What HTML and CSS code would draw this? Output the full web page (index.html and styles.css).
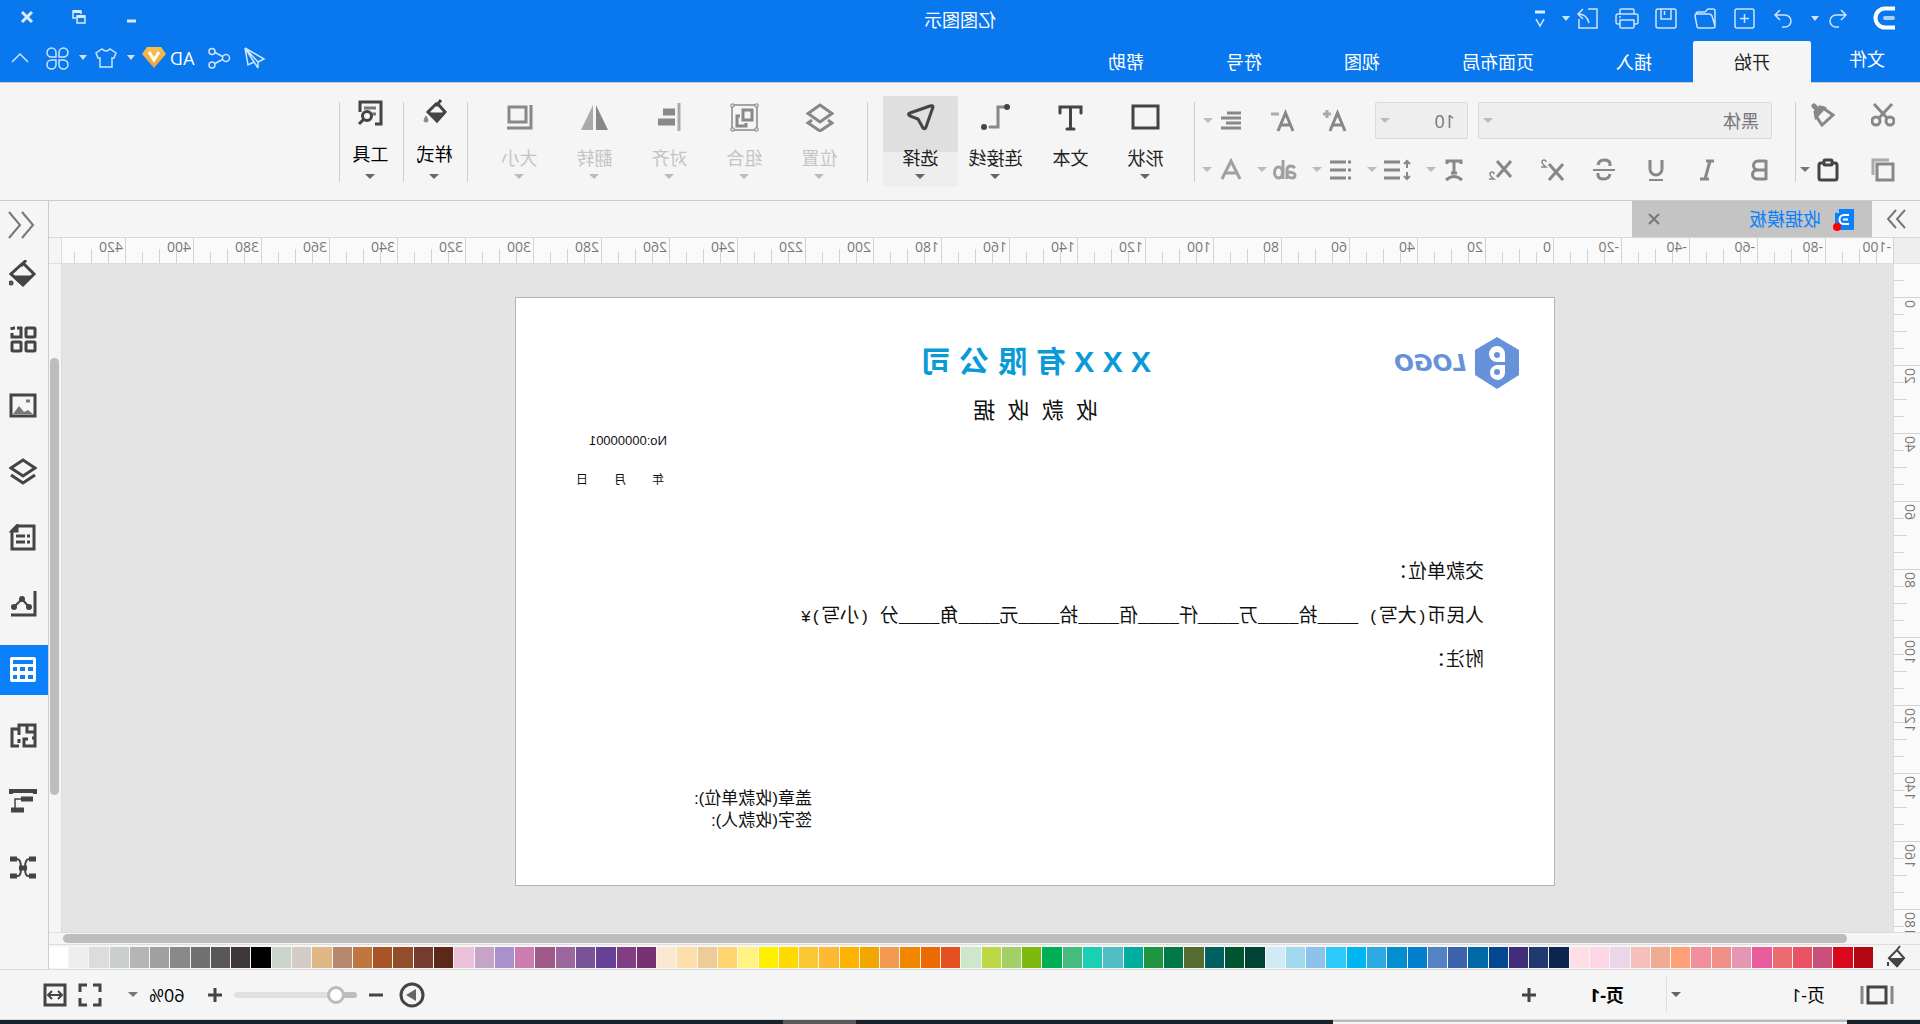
FILE: index.html
```html
<!DOCTYPE html>
<html lang="zh-CN">
<head>
<meta charset="utf-8">
<title>亿图图示</title>
<link rel="stylesheet" href="styles.css">
</head>
<body>
<div class="window">
  <header class="header">
    <div class="titlebar">
      <div class="quick">
        <svg class="brand" width="24" height="26" viewBox="0 0 24 26" fill="none"><path d="M1 3.500H11A9.500 9.500 0 0 1 11 22.500H1" stroke="#fff" stroke-width="4"/><path d="M3 13h8" stroke="#a9cffa" stroke-width="4" stroke-linecap="round"/></svg>
        <button aria-label="撤销"><svg class="ico"><path d="M8 4 3 9l5 5M3 9h10a6 6 0 0 1 0 12h-3"/></svg></button>
        <button class="caret" aria-label="撤销列表"></button>
        <button aria-label="重做"><svg class="ico"><path d="M15 4l5 5-5 5M20 9H10a6 6 0 0 0 0 12h3"/></svg></button>
        <button aria-label="新建"><svg class="ico"><rect x="2" y="3" width="19" height="19" rx="2"/><path d="M11.500 8v9M7 12.500h9"/></svg></button>
        <button aria-label="打开"><svg class="ico"><path d="M2 20V5q0-2 2-2h5l3 3h7q2 0 2 2M2 20q0 2 2 2h14q2 0 2-2l2-10q0-2-2-2H8q-2 0-3 2z"/></svg></button>
        <button aria-label="保存"><svg class="ico"><rect x="2" y="3" width="20" height="19" rx="2"/><path d="M7 3v10h10V3M13.500 5v4"/></svg></button>
        <button aria-label="打印"><svg class="ico"><path d="M5 8V4q0-1 1-1h12q1 0 1 1v4M5 18H3q-2 0-2-2v-6q0-2 2-2h18q2 0 2 2v6q0 2-2 2h-2M5 14h14v7q0 1-1 1H6q-1 0-1-1zM18 11h2"/></svg></button>
        <button aria-label="导出"><svg class="ico"><path d="M12 3H3v19h18v-9M17 3l5 5-5 5M22 8q-9 0-11 9"/></svg></button>
        <button class="caret" aria-label="导出列表"></button>
        <button aria-label="更多"><svg width="12" height="24" viewBox="0 0 12 24"><path d="M1 6h10" stroke="#dbeafd" stroke-width="3" fill="none"/><path d="M2 13l4 7 4-7" stroke="#dbeafd" stroke-width="1.500" fill="none"/></svg></button>
      </div>
      <h1 class="app-title">亿图图示</h1>
      <div class="win-controls">
        <button aria-label="最小化"><svg width="14" height="14"><path d="M2 11h9" stroke="#dbeafd" stroke-width="3"/></svg></button>
        <button aria-label="还原"><svg width="14" height="14" fill="none" stroke="#dbeafd"><path d="M1 6h8v7H1z" stroke-width="1.500"/><path d="M1 6.500h8" stroke-width="3"/><path d="M5 4V1h8v7h-3" stroke-width="1.500"/><path d="M5 1.500h8" stroke-width="3"/></svg></button>
        <button aria-label="关闭"><svg width="14" height="14"><path d="M2 2l10 10M12 2 2 12" stroke="#dbeafd" stroke-width="3"/></svg></button>
      </div>
    </div>
    <div class="menurow">
      <nav class="menu">
        <a class="file" href="#file">文件</a>
        <a class="current" href="#home">开始</a>
        <a href="#insert">插入</a>
        <a href="#layout">页面布局</a>
        <a href="#view">视图</a>
        <a href="#symbol">符号</a>
        <a href="#help">帮助</a>
      </nav>
      <div class="account">
        <button aria-label="发送"><svg class="ico"><path d="M21 2 2 13l6 3zM21 2 18 19l-6-3M8 16v6M12 16 21 2M8 22l4-6"/></svg></button>
        <button aria-label="分享"><svg class="ico"><circle cx="5" cy="12" r="3.500"/><circle cx="19" cy="5.500" r="3"/><circle cx="19" cy="19" r="3"/><path d="M8.500 10.500l7.500-4M8.500 13.500l7.500 4"/></svg></button>
        <button class="user">AD <svg width="24" height="22" viewBox="0 0 24 22"><defs><linearGradient id="g" x2="0" y2="1"><stop stop-color="#fbbf4a"/><stop offset="1" stop-color="#e9a63c"/></linearGradient></defs><path d="M5 0h14l5 7-12 14L0 7z" fill="url(#g)"/><path d="M7 5l5 8 5-8" fill="none" stroke="#fff" stroke-width="3"/></svg></button>
        <button class="caret" aria-label="账户"></button>
        <button aria-label="主题"><svg class="ico"><path d="M8 3q4 4 8 0l6 4-2 5h-2v9H6v-9H4L2 7z"/></svg></button>
        <button class="caret" aria-label="主题列表"></button>
        <button aria-label="应用"><svg class="ico"><path d="M11 11H6.500A4.500 4.500 0 1 1 11 6.500zM14 11h4.500A4.500 4.500 0 1 0 14 6.500zM11 14H6.500A4.500 4.500 0 1 0 11 18.500zM14 14h4.500A4.500 4.500 0 1 1 14 18.500z"/></svg></button>
        <button aria-label="收起"><svg class="ico"><path d="M4 16l8-8 8 8"/></svg></button>
      </div>
    </div>
  </header>

  <section class="ribbon">
    <div class="group clip">
      <div class="row"><button aria-label="剪切"><svg class="tool"><circle cx="5" cy="18" r="4"/><circle cx="19" cy="18" r="4"/><path d="M3 1l13 14M21 1 8 15"/></svg></button><button aria-label="格式刷"><svg class="tool"><path d="M2 12 12 5l7 8-6 9z"/><path d="M11 5l4-1 5 5-1 5z" fill="#888"/><path d="M17 7l4-4" stroke-width="5" stroke-linecap="round"/></svg></button></div>
      <div class="row"><button aria-label="复制"><svg class="tool"><rect x="2" y="6" width="16" height="16"/><path d="M6 2h16v15" stroke="#aaa"/></svg></button><button class="split" aria-label="粘贴"><svg class="tool dark"><rect x="3" y="5" width="18" height="17" rx="2"/><rect x="8" y="2" width="8" height="5" rx="1" fill="#f5f5f5"/></svg><i class="arrow mid"></i></button></div>
    </div>
    <div class="sep"></div>
    <div class="group font">
      <div class="row">
        <label class="combo wide"><select aria-label="字体"><option>黑体</option></select><i class="arrow"></i></label>
        <label class="combo small"><select aria-label="字号"><option>10</option></select><i class="arrow"></i></label>
        <div class="set first">
        <button aria-label="增大字号"><svg class="tool"><path d="M2 22 9.500 4 17 22M5 16h9"/><path d="M16 5h8M20 1v8" stroke="#aaa"/></svg></button>
        <button aria-label="减小字号"><svg class="tool"><path d="M2 22 9.500 4 17 22M5 16h9"/><path d="M16 5h8" stroke="#aaa"/></svg></button>
        <button class="split" aria-label="对齐"><svg class="tool"><path d="M2 4h14M2 9h20M2 14h15M2 19h20"/></svg><i class="arrow"></i></button>
        </div>
      </div>
      <div class="row">
        <div class="set marks">
        <button aria-label="加粗"><svg class="tool"><path d="M6 3h8a4 4 0 0 1 0 9H6M7 12h8a4 4 0 0 1 0 9H6M6 2v20"/></svg></button>
        <button aria-label="斜体"><svg class="tool"><path d="M6 3h8M11 21h9M10 3l5 18"/></svg></button>
        <button aria-label="下划线"><svg class="tool"><path d="M6 2v9a6 6 0 0 0 12 0V2"/><path d="M5 22h14" stroke-width="2"/></svg></button>
        <button aria-label="删除线"><svg class="tool"><path d="M18 7q-1-5-6-5-6 0-6 4v2M6 16q1 5 6 5 6 0 6-4v-2"/><path d="M1 12h22" stroke-width="2"/></svg></button>
        <button aria-label="上标"><svg class="tool"><path d="M1 6l14 16M15 6 1 22"/><path d="M18 4q0-2 2-2t2 2q0 2-4 5h5" stroke-width="1.500"/></svg></button>
        <button aria-label="下标"><svg class="tool"><path d="M1 3l14 16M15 3 1 19"/><path d="M18 16q0-2 2-2t2 2q0 2-4 5h5" stroke-width="1.500"/></svg></button>
        </div>
        <div class="set drops">
        <button class="split" aria-label="文字方向"><svg class="tool"><path d="M5 6V3h14v3M12 3v12M9 15h6"/><path d="M4 22q8-7 16 0"/></svg><i class="arrow"></i></button>
        <button class="split" aria-label="行距"><svg class="tool spacing"><path d="M4 3v7M4 14v7M1 6l3-3 3 3M1 18l3 3 3-3" stroke-width="2"/><path d="M11 4h16M11 12h16M11 20h16"/></svg><i class="arrow"></i></button>
        <button class="split" aria-label="列表"><svg class="tool"><path d="M1 4h3M1 12h3M1 20h3M6 4h16M6 12h16M6 20h16"/></svg><i class="arrow"></i></button>
        <button class="split" aria-label="高亮"><svg class="tool soft"><path d="M2 10q2-2 4-2 4 0 4 4v9M10 14q-8 0-8 3 0 3 3 3 4 0 5-4M14 2v19"/><ellipse cx="18.500" cy="14.500" rx="4" ry="5.500"/></svg><i class="arrow"></i></button>
        <button class="split" aria-label="字体颜色"><svg class="tool soft"><path d="M2 21 11 3l9 18M5 15h12"/></svg><i class="arrow"></i></button>
        </div>
      </div>
    </div>
    <div class="sep"></div>
    <div class="bigs">
      <button class="big"><svg class="pic"><rect x="2" y="3" width="25" height="22"/></svg><span>形状</span><i class="arrow dk"></i></button>
      <button class="big"><svg class="pic"><path d="M4 10V4h21v6M14.500 4v22M11 26h7"/></svg><span>文本</span></button>
      <button class="big"><svg class="pic"><path d="M4 4h8v20h8" stroke="#888"/><circle cx="3" cy="4" r="1.500"/><circle cx="26" cy="24" r="1.500"/></svg><span>连接线</span><i class="arrow dk"></i></button>
      <button class="big chosen"><svg class="pic"><path d="M2 4q0-2 3-1l20 7q3 1 0 3l-8 3-5 9q-2 2-3-1z"/></svg><span>选择</span><i class="arrow dk"></i></button>
    </div>
    <div class="sep"></div>
    <div class="bigs off">
      <button class="big" disabled><svg class="pic"><path d="M14 2l12 8.500L14 19 2 10.500zM6 17l-4 3 12 8 12-8-4-3"/></svg><span>位置</span><i class="arrow"></i></button>
      <button class="big" disabled><svg class="pic"><path d="M2 2h25v25H2z" stroke-width="1.500"/><path d="M7 7h9v10H7zM19 13h3v10h-9v-3"/><path d="M1 1h3v3H1zM25 1h3v3h-3zM1 25h3v3H1zM25 25h3v3h-3z" fill="#eee" stroke-width="1"/></svg><span>组合</span><i class="arrow"></i></button>
      <button class="big" disabled><svg class="pic"><path d="M5 0v28" stroke="#aaa"/><path d="M9 9h12M9 19h17" stroke-width="7"/></svg><span>对齐</span><i class="arrow"></i></button>
      <button class="big" disabled><svg class="pic"><path d="M13 2v25H1z" fill="#888" stroke="none"/><path d="M16 2v25h12z" fill="#aaa" stroke="none"/></svg><span>翻转</span><i class="arrow"></i></button>
      <button class="big" disabled><svg class="pic"><path d="M8 4h17v15H8zM3 2v23h24"/></svg><span>大小</span><i class="arrow"></i></button>
    </div>
    <div class="sep"></div>
    <button class="big narrow"><svg class="pic"><path d="M8 1l5 6M11 5 4 13l8 9 9-9-9-9"/><path d="M4 14h17l-9 9z" fill="#444" stroke-width="1"/><path d="M23 17q-4 6 0 6t0-6z" fill="#888" stroke="#888" stroke-width="1"/></svg><span>样式</span><i class="arrow dk"></i></button>
    <div class="sep"></div>
    <button class="big narrow"><svg class="pic"><path d="M10 25H4V3h21v10"/><path d="M9 9h12M9 15h4" stroke="#777"/><circle cx="18" cy="17" r="4.500"/><path d="M21 20l5 5"/></svg><span>工具</span><i class="arrow dk"></i></button>
    <div class="sep"></div>
  </section>

  <main class="work">
    <section class="editor">
      <div class="tabs">
        <button class="expand" aria-label="展开"><svg width="20" height="20"><path d="M1 1l8 9-8 9M10 1l8 9-8 9" fill="none" stroke="#777" stroke-width="2"/></svg></button>
        <div class="tab">
          <svg width="21" height="24" viewBox="0 0 21 24"><path d="M0 2h15l4 4v17H0z" fill="#0a80fb"/><path d="M15 2v4h4z" fill="#9cc9fb"/><path d="M5 8h5a4.500 4.500 0 0 1 0 9H5M6 12.500h5" fill="none" stroke="#fff" stroke-width="2"/><circle cx="17" cy="20" r="4" fill="#f00"/></svg>
          <span>收据模板</span>
          <button aria-label="关闭标签"><svg width="12" height="12"><path d="M1 1l10 10M11 1 1 11" stroke="#777" stroke-width="2"/></svg></button>
        </div>
      </div>
      <div class="ruler-row"><div class="corner"></div><div class="ruler-h" id="rulerH"></div><div class="corner end"></div></div>
      <div class="stage-row">
        <div class="ruler-v" id="rulerV"></div>
        <div class="stage">
          <article class="paper">
            <div class="obj mark"><svg width="44" height="52" viewBox="0 0 44 52"><path d="M22 0l22 13v25L22 52 0 38V13z" fill="#6792da"/><path d="M14 25V17a8 8 0 1 1 8 8zM14 28h8a7.500 7.500 0 1 1-8 8z" fill="#fff"/><circle cx="22" cy="18" r="3" fill="#6792da"/><circle cx="22" cy="35" r="3" fill="#6792da"/></svg><span>LOGO</span></div>
            <h2 class="obj company">X X X 有 限 公 司</h2>
            <p class="obj receipt">收&nbsp; 款&nbsp; 收&nbsp; 据</p>
            <p class="obj number">No:00000001</p>
            <p class="obj date"><span>年</span><span>月</span><span>日</span></p>
            <div class="obj lines">
              <p>交款单位：</p>
              <p>人民币<code>(</code>大写<code>) ____</code>拾<code>____</code>万<code>____</code>仟<code>____</code>佰<code>____</code>拾<code>____</code>元<code>____</code>角<code>____</code>分<code> (</code>小写<code>)¥</code></p>
              <p>附注：</p>
            </div>
            <p class="obj sign">盖章(收款单位):<br>签字(收款人):</p>
          </article>
        </div>
        <div class="vscroll"><div class="thumb"></div></div>
      </div>
      <div class="hscroll"><div class="thumb"></div></div>
      <div class="palette">
        <button aria-label="填充"><svg width="20" height="24" fill="none" stroke="#444" stroke-width="2"><path d="M6 1l4 5M9 5l8 8-8 8-7-8z"/><path d="M3 14h13l-7 7z" fill="#444"/><path d="M18 17v4"/></svg></button>
        <div class="swatches" id="swatches"></div>
      </div>
    </section>
    <aside class="side">
      <button class="fold" aria-label="折叠"><svg width="28" height="28"><path d="M13 1 2 14l11 13M26 1 15 14l11 13" fill="none" stroke="#777" stroke-width="2"/></svg></button>
      <button aria-label="填充"><svg class="panel"><path d="M11 0l5 6M14 3 3 14l11 11 12-11L14 3"/><path d="M4 16h21L14 26z" fill="#444" stroke-width="1"/><circle cx="26" cy="23" r="1"/></svg></button>
      <button aria-label="符号"><svg class="panel"><rect x="2" y="2" width="9" height="9" rx="1"/><rect x="16" y="16" width="9" height="9" rx="1"/><rect x="2" y="16" width="9" height="9" rx="1"/><path d="M20 2h-4v9h9V7M22 2h2M25 1v3"/></svg></button>
      <button aria-label="图片"><svg class="panel"><rect x="2" y="3" width="24" height="21"/><path d="M4 22l5-4 4 2 5-6 6 8z" fill="#777" stroke="none"/><path d="M7 9h4" stroke="#777"/></svg></button>
      <button aria-label="图层"><svg class="panel"><path d="M14 2l12 8-12 8-12-8zM2 17l12 8 12-8"/></svg></button>
      <button aria-label="备注"><svg class="panel"><path d="M3 2h17l5 5v18H3z"/><path d="M20 2v5h5z" fill="#444"/><path d="M7 12h3M12 12h9M7 18h3M12 18h9"/></svg></button>
      <button aria-label="图表"><svg class="panel"><path d="M2 1v24h24"/><path d="M8 17l7-8 8 8" stroke-width="2"/><circle cx="8" cy="17" r="1.500"/><circle cx="15" cy="9" r="1.500"/><circle cx="23" cy="17" r="1.500"/></svg></button>
      <button class="chosen" aria-label="表格"><svg class="panel"><rect x="1" y="1" width="26" height="25" rx="2" fill="#fff" stroke="none"/><path d="M4 6h20M4 13h5M12 13h5M20 13h4M4 21h5M12 21h5M20 21h4" stroke="#0a80fb" stroke-width="4"/></svg></button>
      <button aria-label="平面图"><svg class="panel"><path d="M18 10V3H2v21h11v-7H9M18 7h7v17h-7M10 3v7H2M2 16h3M18 13v-3M18 17v4"/></svg></button>
      <button aria-label="甘特图"><svg class="panel"><path d="M2 6V3h24v3" stroke-width="4"/><path d="M4 11h12M13 22h13" stroke-width="5"/><path d="M16 11h6v10" stroke-width="1.500"/></svg></button>
      <button aria-label="导图"><svg class="panel"><path d="M1 5h7M1 22h7M20 5h7M20 22h7M10 14h8" stroke-width="5"/><path d="M8 5q4 0 4 9t-4 8M20 5q-4 0-4 9t4 8" stroke-width="2"/></svg></button>
    </aside>
  </main>

  <footer class="status">
    <div class="pages">
      <button aria-label="页面"><svg width="34" height="20" fill="none" stroke-width="3"><path d="M2 1v18M32 1v18" stroke="#888"/><rect x="8" y="2" width="18" height="16" stroke="#444"/></svg></button>
      <label class="page-pick"><select aria-label="当前页"><option>页-1</option></select><i class="arrow dk"></i></label>
      <button class="page-tab">页-1</button>
      <button aria-label="添加页"><svg class="pm"><path d="M1 8h14M8 1v14"/></svg></button>
    </div>
    <div class="zoom">
      <button aria-label="播放"><svg width="26" height="26"><circle cx="13" cy="13" r="11" fill="none" stroke="#444" stroke-width="3"/><path d="M9 7l10 6-10 6z" fill="#666"/></svg></button>
      <button aria-label="缩小"><svg class="pm"><path d="M1 8h14"/></svg></button>
      <input type="range" min="0" max="100" value="12" aria-label="缩放">
      <button aria-label="放大"><svg class="pm"><path d="M1 8h14M8 1v14"/></svg></button>
      <button class="percent">60%<i class="arrow mid"></i></button>
      <button class="full" aria-label="全屏"><svg width="24" height="24" fill="none" stroke="#444" stroke-width="3"><path d="M2 9V2h7M15 2h7v7M22 15v7h-7M9 22H2v-7"/></svg></button>
      <button aria-label="适应宽度"><svg width="24" height="24" fill="none" stroke="#444" stroke-width="3"><rect x="2" y="2" width="20" height="20"/><path d="M6 12h12M9 8l-4 4 4 4M15 8l4 4-4 4" stroke-width="2"/></svg></button>
    </div>
  </footer>
  <div class="desktop"><div class="app-a"></div><div class="app-b"></div></div>
</div>
<script src="app.js"></script>
</body>
</html>
```
FILE: styles.css
```css
* { box-sizing: border-box; }
body {
  margin: 0;
  font: 18px/24px "Open Sans", "Noto Sans CJK SC", sans-serif;
  color: #222;
  background: #f5f5f5;
}
h1, h2, p { margin: 0; font-weight: 400; }
button { display: flex; align-items: center; justify-content: center; padding: 0; border: 0; background: none; font: inherit; color: inherit; }
a { color: inherit; text-decoration: none; }
svg { display: block; flex: none; }
select { appearance: none; border: 0; background: none; font: inherit; color: inherit; padding: 0; flex: 1; min-width: 0; height: 100%; opacity: 1; }

/* the whole window is shown as in a mirror */
.window { display: flex; flex-direction: column; height: 100vh; transform: scaleX(-1); overflow: hidden; background: #f5f5f5; }

/* header */
.header { background: #0977ed; color: #fff; border-bottom: 1px solid #ccc; height: 83px; flex: none; display: flex; flex-direction: column; }
.titlebar { display: grid; grid-template-columns: 1fr auto 1fr; height: 41px; }
.quick { display: flex; align-items: center; gap: 15px; padding-left: 24px; height: 36px; }
.brand { margin-right: 8px; }
.app-title { font-size: 18px; line-height: 40px; }
.ico { width: 24px; height: 24px; fill: none; stroke: #cfe3fc; stroke-width: 1.5; }
.caret { width: 10px; height: 24px; }
.quick .caret { margin: 0 0 0 -10px; }
.caret::before { content: ""; border: 4px solid transparent; border-top: 5px solid #cfe3fc; border-bottom: 0; }
.win-controls { display: flex; justify-content: flex-end; align-items: center; gap: 38px; padding-right: 20px; height: 34px; }
.menurow { display: flex; justify-content: space-between; height: 41px; }
.menu { display: flex; }
.menu a { padding: 0 41px; line-height: 43px; }
.menu .file { padding: 0 38px 0 35px; line-height: 36px; }
.menu .current { background: #f5f5f5; color: #222; border-radius: 2px 2px 0 0; height: 42px; }
.account { display: flex; align-items: center; gap: 11px; padding: 0 8px 8px 0; }
.account .user { gap: 4px; padding-left: 2px; }
.account .caret { margin: 0 -3px 0 -5px; }
.account > button:last-child { margin-left: 3px; }

/* ribbon */
.ribbon { display: flex; align-items: flex-start; height: 118px; flex: none; padding-top: 13px; border-bottom: 1px solid #ccc; }
.sep { width: 1px; height: 80px; margin-top: 6px; background: #ccc; flex: none; }
.arrow { border: 5px solid transparent; border-top: 5px solid #bbb; border-bottom: 0; flex: none; width: 0; height: 0; }
.arrow.mid { border-top-color: #777; }
.arrow.dk { border-top-color: #666; }
.group { padding-top: 6px; }
.row { display: flex; align-items: center; height: 37px; }
.row + .row { margin-top: 12px; }
.tool { width: 24px; height: 24px; fill: none; stroke: #888; stroke-width: 3; }
.spacing { width: 28px; }
.dark { stroke: #444; }
.soft { stroke: #a0a0a0; }
.split { gap: 6px; }
.clip { padding-left: 25px; width: 124px; }
.clip .row:first-child { gap: 36px; height: 26px; }
.clip .row + .row { gap: 31px; margin-top: 23px; }
.font { width: 600px; padding-left: 23px; }
.combo { display: flex; align-items: center; height: 37px; border: 1px solid #dadada; border-radius: 2px; background: #eee; color: #777; padding: 0 4px 0 12px; }
.wide { width: 294px; margin-right: 10px; }
.small { width: 93px; }
.set { display: flex; align-items: center; }
.first { gap: 28px; padding-left: 28px; }
.marks { gap: 28px; }
.drops { gap: 15px; padding-left: 22px; }
.bigs { display: flex; padding: 0 15px 0 11px; }
.bigs.off { padding: 0 14px 0 10px; color: #c4c4c4; }
.big { width: 75px; height: 91px; flex-direction: column; justify-content: flex-start; padding-top: 7px; border-radius: 2px; color: inherit; }
.big span { margin: 15px 0 5px; line-height: 22px; }
.big.chosen { background: linear-gradient(#dfdfdf 56px, #eee 56px); }
.pic { width: 29px; height: 29px; fill: none; stroke: #444; stroke-width: 3; stroke-linecap: round; }
.off .pic { stroke: #888; stroke-linecap: butt; }
.narrow { width: 63px; padding: 3px 0 0 2px; color: #000; }
.narrow .pic { stroke-linecap: butt; }
.narrow span { margin-bottom: 9px; }

/* work area */
.work { flex: 1; display: flex; min-height: 0; border-bottom: 1px solid #ddd; }
.editor { flex: 1; min-width: 0; display: flex; flex-direction: column; }
.tabs { display: flex; height: 37px; flex: none; border-bottom: 1px solid #d8d8d8; }
.expand { width: 48px; }
.tab { display: flex; align-items: center; width: 240px; padding: 0 16px 0 18px; background: #c4c4c4; color: #0a80fb; }
.tab span { flex: 1; padding-left: 12px; }
.ruler-row { display: flex; height: 26px; flex: none; color: #777; font-size: 14px; border-bottom: 1px solid #ddd; }
.corner { width: 26px; flex: none; background: #eee; }
.corner.end { width: 13px; background: #f5f5f5; border-left: 1px solid #ddd; }
.ruler-h { flex: 1; display: flex; overflow: hidden; background: #fafafa; }
.seg-h {
  flex: 0 0 68px; padding-left: 2px; line-height: 17px; border-left: 1px solid #d4d4d4;
  background: linear-gradient(#d4d4d4, #d4d4d4) 16px 100%/1px 11px no-repeat, linear-gradient(#d4d4d4, #d4d4d4) 33px 100%/1px 14px no-repeat, linear-gradient(#d4d4d4, #d4d4d4) 50px 100%/1px 11px no-repeat;
}
.stage-row { flex: 1; display: flex; min-height: 0; }
.ruler-v { width: 27px; flex: none; display: flex; flex-direction: column; overflow: hidden; background: #fafafa; border-right: 1px solid #ddd; color: #777; font-size: 14px; }
.seg-v {
  flex: 0 0 68px; border-top: 1px solid #d4d4d4;
  background: linear-gradient(#d4d4d4, #d4d4d4) 100% 16px/10px 1px no-repeat, linear-gradient(#d4d4d4, #d4d4d4) 100% 33px/13px 1px no-repeat, linear-gradient(#d4d4d4, #d4d4d4) 100% 50px/10px 1px no-repeat;
}
.seg-v span { display: block; writing-mode: vertical-rl; transform: rotate(180deg); line-height: 20px; width: 20px; padding-bottom: 2px; }
.seg-v.start { flex-basis: 33px; border-top: 0; background-position: 100% 0, 100% 16px, 100% 80px; background-size: 0 0, 10px 1px, 0 0; }
.stage { flex: 1; min-width: 0; overflow: hidden; background: #e4e4e4; padding: 33px 0 0 338px; }
.vscroll { width: 13px; flex: none; padding: 94px 1px 0 2px; border-left: 1px solid #ddd; }
.vscroll .thumb { height: 437px; border-radius: 5px; background: #bdbdbd; }
.hscroll { height: 13px; flex: none; padding: 1px 14px 1px 73px; border: solid #ddd; border-width: 1px 0; }
.hscroll .thumb { height: 9px; border-radius: 5px; background: #bdbdbd; }
.palette { display: flex; align-items: center; height: 24px; flex: none; }
.palette button { width: 47px; }
.swatches { flex: 1; display: flex; gap: 1px; }
.swatches i { flex: 1; height: 21px; }

/* the receipt */
.paper { position: relative; width: 1040px; height: 589px; border: 1px solid #b4b4b4; background: #fff; color: #111; }
.obj { position: absolute; white-space: pre; }
.mark { left: 35px; top: 39px; display: flex; align-items: center; gap: 9px; color: #6792da; font: italic bold 23px/28px "DejaVu Sans", sans-serif; }
.company { left: 403px; top: 44px; color: #0a9ad7; font: bold 30px/40px "Liberation Sans", "Noto Sans CJK SC", sans-serif; }
.receipt { left: 456px; top: 98px; font: 22px/30px "Liberation Sans", "Noto Sans CJK SC", sans-serif; }
.number { left: 887px; top: 135px; font: 13px/16px "Liberation Sans", sans-serif; }
.date { left: 890px; top: 174px; display: flex; gap: 26px; font-size: 12px; line-height: 16px; }
.lines { left: 70px; top: 251px; font-size: 19px; line-height: 44px; white-space: nowrap; }
.lines p { height: 44px; }
.lines code { font: 17px/20px "Liberation Mono", monospace; }
.sign { left: 742px; top: 490px; font: 17px/22px "Liberation Sans", "Noto Sans CJK SC", sans-serif; }

/* side panel */
.side { width: 49px; flex: none; display: flex; flex-direction: column; border-left: 1px solid #ccc; }
.side button { height: 50px; margin-bottom: 16px; padding-left: 2px; flex: none; }
.side .fold { height: 48px; margin-bottom: 0; padding-left: 6px; }
.side .chosen { background: #0a80fb; }
.panel { width: 28px; height: 28px; fill: none; stroke: #444; stroke-width: 3; }

/* status bar */
.status { display: flex; justify-content: space-between; height: 50px; flex: none; border-bottom: 1px solid #ddd; color: #000; }
.pages, .zoom { display: flex; align-items: center; }
.pages { padding-left: 26px; }
.page-pick { display: flex; align-items: center; width: 159px; height: 36px; margin-left: 35px; padding-right: 4px; border-right: 1px solid #ddd; }
.page-tab { font-weight: 700; padding: 0 53px 0 42px; }
.pm { width: 16px; height: 16px; fill: none; stroke: #444; stroke-width: 3; }
.zoom { gap: 11px; padding-right: 43px; }
.zoom > button:first-child { margin-right: 4px; }
.percent { gap: 11px; margin-left: 12px; }
.full { margin-left: 15px; }
input[type="range"] { appearance: none; width: 123px; height: 6px; margin: 0; border-radius: 3px; background: linear-gradient(90deg, #bdbdbd 20px, #e0e0e0 20px); }
input[type="range"]::-webkit-slider-thumb { appearance: none; width: 18px; height: 18px; border: 3px solid #bbb; border-radius: 50%; background: #fff; }

/* edge of the desktop's bar under the window */
.desktop { display: flex; height: 4px; flex: none; background: #18222b; padding-left: 73px; }
.app-a { width: 514px; background: #f5f5f5; border-top: 2px solid #bbb; }
.app-b { width: 73px; margin-left: 477px; background: #5a5858; }
```
FILE: app.js
```js
const colours = `b30714 d9091b c8507a e95364 ec6b70 e75d9d e397b5 ef8f88 f1909a ffa077 f0ab95 f7bfbb ead6e8 ffd6e5 ffdfe5
0e2450 203a70 3f2d79 054690 0068a6 3c62ae 5383c4 0180cf 0090d0 2ea9e2 00b6f1 2dcbfb 8cc2ec a1daef d0ebf6
004234 015430 00605f 556b2f 017848 20953f 00ae9f 50bec2 1acfb4 46bb7e 00b055 7eb90f a3d065 bed744 cde8c9
e4501f ec6a00 f18600 f39a52 f2a600 ffb100 fdb933 f9c933 ffda00 fff000 fff384 ffd471 eccd98 fedeac fce8d0
783171 823e84 674196 785398 9a679f a05a8a cd7cb0 a991cd c6a4c8 ecc1da
5c281a 773a30 924d2a a95426 bf763f b5886f dfb886 d3ccc6 c9d4cb
000000 3e3938 595757 717171 898989 9fa09f b4b5b5 cacecc dcdcdc eeeeee ffffff`.split(/\s+/);
const swatches = document.getElementById("swatches");
for (const c of colours) {
  const i = document.createElement("i");
  i.style.background = "#" + c;
  swatches.append(i);
}

const rulerH = document.getElementById("rulerH");
for (let n = -100; n <= 420; n += 20) {
  const seg = document.createElement("div");
  seg.className = "seg-h";
  seg.textContent = n;
  rulerH.append(seg);
}

const rulerV = document.getElementById("rulerV");
const start = document.createElement("div");
start.className = "seg-v start";
rulerV.append(start);
for (let n = 0; n <= 180; n += 20) {
  const seg = document.createElement("div");
  seg.className = "seg-v";
  const label = document.createElement("span");
  label.textContent = n;
  seg.append(label);
  rulerV.append(seg);
}
```
